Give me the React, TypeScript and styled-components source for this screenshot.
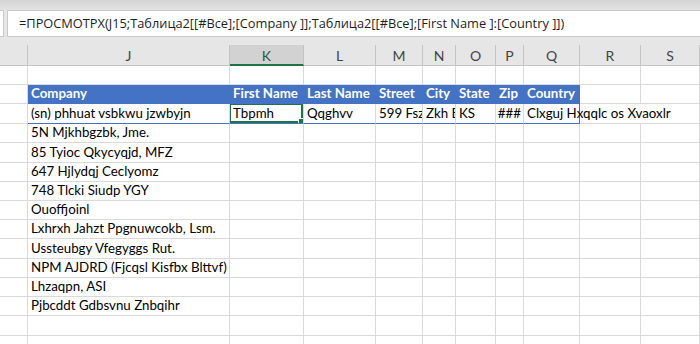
import React from "react";
import styled, { createGlobalStyle, css } from "styled-components";

const GlobalStyle = createGlobalStyle`
  html, body { margin: 0; padding: 0; background: #ffffff; }
  body { font-family: "Lato", "Liberation Sans", sans-serif; overflow: hidden; }
  * { box-sizing: border-box; }
`;

const COLS = "28px 202px 74px 72px 47px 33px 40px 28px 56px 61px 1fr";
const GRID = "#d9d9d9";
const BLUE = "#4472c4";
const GREEN = "#217346";

const Page = styled.div`
  width: 700px;
  height: 344px;
  overflow: hidden;
  display: flex;
  flex-direction: column;
  background: #ffffff;
  & > * { flex-shrink: 0; }
`;

const TopStrip = styled.div`
  height: 10px;
  background: linear-gradient(#d4d4d4, #e2e2e2);
`;

const FormulaArea = styled.div`
  display: flex;
  gap: 3px;
  padding: 0 0 8px 0;
  background: #e6e6e6;
`;

const NameBoxEdge = styled.div`
  width: 4px;
  height: 27px;
  background: #ffffff;
  border: 1px solid #c8c8c8;
  border-left: none;
`;

const FormulaInput = styled.div`
  flex: 1;
  height: 27px;
  background: #ffffff;
  border: 1px solid #c8c8c8;
  border-right: none;
  padding: 0 0 1px 11px;
  display: flex;
  align-items: center;
  font-family: "Open Sans", "Noto Sans", sans-serif;
  font-size: 12.8px;
  color: #1f1f1f;
  white-space: nowrap;
  overflow: hidden;
`;

const Sheet = styled.div`
  display: flex;
  flex-direction: column;
  & > * { flex-shrink: 0; }
`;

const Row = styled.div<{ $h: number }>`
  display: grid;
  grid-template-columns: ${COLS};
  height: ${(p) => p.$h}px;
`;

const ColHead = styled.div<{ $active?: boolean }>`
  background: ${(p) => (p.$active ? "#d2d2d2" : "#e6e6e6")};
  border-right: 1px solid #c4c4c4;
  border-bottom: ${(p) => (p.$active ? `2px solid ${GREEN}` : "1px solid #c4c4c4")};
  color: ${(p) => (p.$active ? "#2b5b3f" : "#444444")};
  font-size: 14px;
  display: flex;
  align-items: center;
  justify-content: center;
  padding-top: 1px;
`;

type CellKind = "plain" | "th" | "td";

const Cell = styled.div<{
  $kind?: CellKind;
  $right?: boolean;
  $edge?: boolean;
  $overflow?: boolean;
  $noRight?: boolean;
}>`
  position: relative;
  display: flex;
  align-items: flex-end;
  justify-content: ${(p) => (p.$right ? "flex-end" : "flex-start")};
  padding: 0 2px 1px 3px;
  font-size: 13.3px;
  line-height: 17px;
  color: #000000;
  white-space: nowrap;
  overflow: ${(p) => (p.$overflow ? "visible" : "hidden")};
  background: #ffffff;
  border-right: 1px solid ${GRID};
  border-bottom: 1px solid ${GRID};
  ${(p) => p.$noRight && css`border-right-color: transparent;`}
  ${(p) =>
    p.$kind === "th" &&
    css`
      background: ${BLUE};
      color: #ffffff;
      font-weight: 700;
      border-right-color: ${BLUE};
      border-bottom-color: ${BLUE};
    `}
  ${(p) =>
    p.$kind === "td" &&
    css`
      border-bottom-color: ${BLUE};
    `}
  ${(p) => p.$edge && css`border-right-color: ${BLUE};`}
  ${(p) => p.$overflow && css`z-index: 1;`}
`;

const Selection = styled.div`
  position: absolute;
  left: -1px;
  top: -1px;
  right: 0;
  bottom: 0;
  border: 2px solid ${GREEN};
  pointer-events: none;
  z-index: 2;
`;

const FillHandle = styled.div`
  position: absolute;
  right: -4px;
  bottom: -4px;
  width: 7px;
  height: 7px;
  background: ${GREEN};
  border: 1px solid #ffffff;
`;

const letters = ["", "J", "K", "L", "M", "N", "O", "P", "Q", "R", "S"];
const headers = ["Company", "First Name", "Last Name", "Street", "City", "State", "Zip", "Country"];
const dataRow = ["(sn) phhuat vsbkwu jzwbyjn", "Tbpmh", "Qqghvv", "599 Fszj", "Zkh E", "KS", "###", "Clxguj Hxqqlc os Xvaoxlr"];
const companies = [
  "5N Mjkhbgzbk, Jme.",
  "85 Tyioc Qkycyqjd, MFZ",
  "647 Hjlydqj Ceclyomz",
  "748 Tlcki Siudp YGY",
  "Ouoffjoinl",
  "Lxhrxh Jahzt Ppgnuwcokb, Lsm.",
  "Ussteubgy Vfegyggs Rut.",
  "NPM AJDRD (Fjcqsl Kisfbx Blttvf)",
  "Lhzaqpn, ASI",
  "Pjbcddt Gdbsvnu Znbqihr",
  "",
  "",
];
const bodyHeights = [19, 20, 19, 19, 19, 19, 20, 19, 19, 19, 20, 9];

const formula =
  "=ПРОСМОТРX(J15;Таблица2[[#Все];[Company ]];Таблица2[[#Все];[First Name ]:[Country ]])";

export default function App() {
  return (
    <>
      <GlobalStyle />
      <Page>
        <TopStrip />
        <FormulaArea>
          <NameBoxEdge />
          <FormulaInput>{formula}</FormulaInput>
        </FormulaArea>
        <Sheet>
          <Row $h={21}>
            {letters.map((l) => (
              <ColHead key={l || "corner"} $active={l === "K"}>
                {l}
              </ColHead>
            ))}
          </Row>
          <Row $h={19}>
            {letters.map((l) => (
              <Cell key={l} />
            ))}
          </Row>
          <Row $h={19}>
            <Cell />
            {headers.map((h, i) => (
              <Cell key={h} $kind="th" $edge={i === headers.length - 1}>
                {h}
              </Cell>
            ))}
            <Cell />
            <Cell />
          </Row>
          <Row $h={20}>
            <Cell />
            {dataRow.map((d, i) => (
              <Cell
                key={i}
                $kind="td"
                $right={i === 6}
                $edge={i === dataRow.length - 1}
                $overflow={i === dataRow.length - 1}
              >
                {d}
                {i === 1 && (
                  <Selection>
                    <FillHandle />
                  </Selection>
                )}
              </Cell>
            ))}
            <Cell $noRight />
            <Cell />
          </Row>
          {companies.map((c, r) => (
            <Row key={r} $h={bodyHeights[r]}>
              {letters.map((l, i) => (
                <Cell key={l}>{i === 1 ? c : ""}</Cell>
              ))}
            </Row>
          ))}
        </Sheet>
      </Page>
    </>
  );
}
